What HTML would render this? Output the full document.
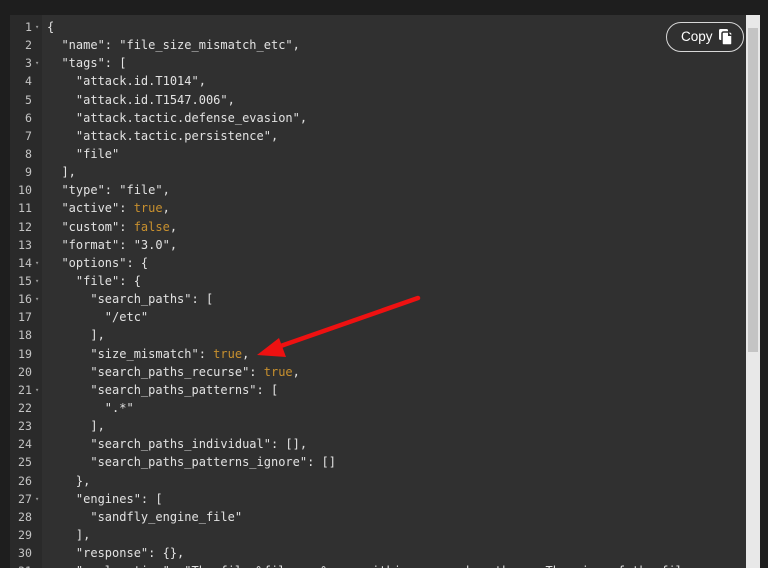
<!DOCTYPE html>
<html><head><style>
html,body{margin:0;padding:0;width:768px;height:568px;overflow:hidden;background:#1e1e1e}
.ed{position:absolute;left:10px;top:15px;width:736px;height:553px;background:#303030;overflow:hidden}
.gut{position:absolute;left:0;top:0;width:32px;height:100%;background:#2a2a2a}
.ln,.code{position:absolute;top:3px;font-family:"DejaVu Sans Mono","Liberation Mono",monospace;line-height:18.14px;white-space:pre}
.ln{left:0;width:32px;color:#c4c4c4;font-size:11.6px}
.ln div{position:relative;width:22px;text-align:right}
.ln .f::after{content:"▾";position:absolute;left:25px;top:0;font-size:7px;color:#999}
.code{left:37px;color:#e2e2e2;font-size:12px}
.b{color:#c8902e}
.sb{position:absolute;left:746px;top:15px;width:14px;height:553px;background:#e8e8e8}
.th{position:absolute;left:748px;top:28px;width:10px;height:324px;background:#c4c4c4}
.copy{position:absolute;left:666px;top:22px;width:78px;height:30px;border:1.5px solid #d8d8d8;border-radius:15px;box-sizing:border-box;color:#fff;font-family:"Liberation Sans",sans-serif;font-size:13.5px;background:#303030}
.copy span{position:absolute;left:14px;top:6px}
</style></head><body>
<div class="ed">
<div class="gut"></div>
<div class="ln"><div class="f">1</div><div>2</div><div class="f">3</div><div>4</div><div>5</div><div>6</div><div>7</div><div>8</div><div>9</div><div>10</div><div>11</div><div>12</div><div>13</div><div class="f">14</div><div class="f">15</div><div class="f">16</div><div>17</div><div>18</div><div>19</div><div>20</div><div class="f">21</div><div>22</div><div>23</div><div>24</div><div>25</div><div>26</div><div class="f">27</div><div>28</div><div>29</div><div>30</div><div>31</div></div>
<div class="code">{
  "name": "file_size_mismatch_etc",
  "tags": [
    "attack.id.T1014",
    "attack.id.T1547.006",
    "attack.tactic.defense_evasion",
    "attack.tactic.persistence",
    "file"
  ],
  "type": "file",
  "active": <span class="b">true</span>,
  "custom": <span class="b">false</span>,
  "format": "3.0",
  "options": {
    "file": {
      "search_paths": [
        "/etc"
      ],
      "size_mismatch": <span class="b">true</span>,
      "search_paths_recurse": <span class="b">true</span>,
      "search_paths_patterns": [
        ".*"
      ],
      "search_paths_individual": [],
      "search_paths_patterns_ignore": []
    },
    "engines": [
      "sandfly_engine_file"
    ],
    "response": {},
    "explanation": "The file %filename% was within a search path ... The size of the file was ... %size%
</div>
</div>
<div class="sb"></div><div class="th"></div>
<div class="copy"><span>Copy</span>
<svg style="position:absolute;left:50px;top:5px" width="18" height="18" viewBox="0 0 18 18"><rect x="2" y="1" width="9" height="11" rx="1.5" fill="#fff"/><rect x="5" y="4" width="10" height="13" rx="1.5" fill="#fff" stroke="#303030" stroke-width="1.5"/><path d="M11 4v4h4" fill="#303030"/></svg></div>
<svg style="position:absolute;left:0;top:0" width="768" height="568"><line x1="418" y1="298" x2="275" y2="348" stroke="#ee1111" stroke-width="4.5" stroke-linecap="round"/><polygon points="257,355 279,338 286,357" fill="#ee1111"/></svg>
</body></html>
